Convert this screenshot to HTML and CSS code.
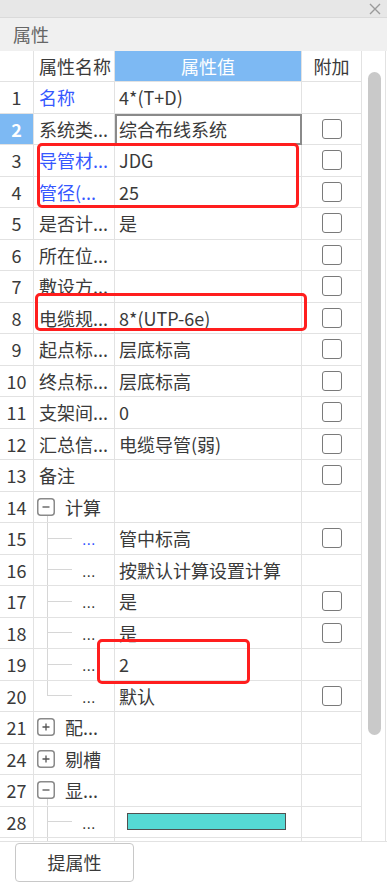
FILE: index.html
```html
<!DOCTYPE html>
<html>

<head>
  <meta charset="UTF-8">
  <title>属性</title>
  <link rel="stylesheet" href="styles.css">
</head>

<body>

  <div id="title-bar">
    <svg class="close-icon" width="12" height="12" viewBox="0 0 12 12">
      <path d="M1 1L11 11M11 1L1 11" stroke="#9a9a9a" stroke-width="1.4" fill="none" />
    </svg>
  </div>

  <div id="panel-title">属性</div>

  <div id="grid-area">
    <div id="grid">
      <div class="row head">
        <div class="cell num"></div>
        <div class="cell name">属性名称</div>
        <div class="cell value">属性值</div>
        <div class="cell extra">附加</div>
      </div>

      <div class="row">
        <div class="cell num">1</div>
        <div class="cell name blue">名称</div>
        <div class="cell value">4*(T+D)</div>
        <div class="cell extra"></div>
      </div>
      <div class="row">
        <div class="cell num selected">2</div>
        <div class="cell name">系统类...</div>
        <div class="cell value editing">综合布线系统</div>
        <div class="cell extra"><span class="check"></span></div>
      </div>
      <div class="row">
        <div class="cell num">3</div>
        <div class="cell name blue">导管材...</div>
        <div class="cell value">JDG</div>
        <div class="cell extra"><span class="check"></span></div>
      </div>
      <div class="row">
        <div class="cell num">4</div>
        <div class="cell name blue">管径(...</div>
        <div class="cell value">25</div>
        <div class="cell extra"><span class="check"></span></div>
      </div>
      <div class="row">
        <div class="cell num">5</div>
        <div class="cell name">是否计...</div>
        <div class="cell value">是</div>
        <div class="cell extra"><span class="check"></span></div>
      </div>
      <div class="row">
        <div class="cell num">6</div>
        <div class="cell name">所在位...</div>
        <div class="cell value"></div>
        <div class="cell extra"><span class="check"></span></div>
      </div>
      <div class="row">
        <div class="cell num">7</div>
        <div class="cell name">敷设方...</div>
        <div class="cell value"></div>
        <div class="cell extra"><span class="check"></span></div>
      </div>
      <div class="row">
        <div class="cell num">8</div>
        <div class="cell name">电缆规...</div>
        <div class="cell value">8*(UTP-6e)</div>
        <div class="cell extra"><span class="check"></span></div>
      </div>
      <div class="row">
        <div class="cell num">9</div>
        <div class="cell name">起点标...</div>
        <div class="cell value">层底标高</div>
        <div class="cell extra"><span class="check"></span></div>
      </div>
      <div class="row">
        <div class="cell num">10</div>
        <div class="cell name">终点标...</div>
        <div class="cell value">层底标高</div>
        <div class="cell extra"><span class="check"></span></div>
      </div>
      <div class="row">
        <div class="cell num">11</div>
        <div class="cell name">支架间...</div>
        <div class="cell value">0</div>
        <div class="cell extra"><span class="check"></span></div>
      </div>
      <div class="row">
        <div class="cell num">12</div>
        <div class="cell name">汇总信...</div>
        <div class="cell value">电缆导管(弱)</div>
        <div class="cell extra"><span class="check"></span></div>
      </div>
      <div class="row">
        <div class="cell num">13</div>
        <div class="cell name">备注</div>
        <div class="cell value"></div>
        <div class="cell extra"><span class="check"></span></div>
      </div>

      <!-- 计算 group -->
      <div class="row">
        <div class="cell num">14</div>
        <div class="cell name group open">
          <svg class="toggle" viewBox="0 0 18 18"><rect x="0.75" y="0.75" width="16.5" height="16.5" rx="3" fill="#fff" stroke="#8a8a8a" stroke-width="1.5" /><path d="M5.5 9H12.5" stroke="#555" stroke-width="1.3" /></svg>
          计算
        </div>
        <div class="cell value"></div>
        <div class="cell extra"></div>
      </div>
      <div class="row">
        <div class="cell num">15</div>
        <div class="cell name branch"><span class="dots blue">...</span></div>
        <div class="cell value">管中标高</div>
        <div class="cell extra"><span class="check"></span></div>
      </div>
      <div class="row">
        <div class="cell num">16</div>
        <div class="cell name branch"><span class="dots">...</span></div>
        <div class="cell value">按默认计算设置计算</div>
        <div class="cell extra"></div>
      </div>
      <div class="row">
        <div class="cell num">17</div>
        <div class="cell name branch"><span class="dots">...</span></div>
        <div class="cell value">是</div>
        <div class="cell extra"><span class="check"></span></div>
      </div>
      <div class="row">
        <div class="cell num">18</div>
        <div class="cell name branch"><span class="dots">...</span></div>
        <div class="cell value">是</div>
        <div class="cell extra"><span class="check"></span></div>
      </div>
      <div class="row">
        <div class="cell num">19</div>
        <div class="cell name branch"><span class="dots">...</span></div>
        <div class="cell value">2</div>
        <div class="cell extra"></div>
      </div>
      <div class="row">
        <div class="cell num">20</div>
        <div class="cell name branch last"><span class="dots">...</span></div>
        <div class="cell value">默认</div>
        <div class="cell extra"><span class="check"></span></div>
      </div>

      <div class="row">
        <div class="cell num">21</div>
        <div class="cell name group">
          <svg class="toggle" viewBox="0 0 18 18"><rect x="0.75" y="0.75" width="16.5" height="16.5" rx="3" fill="#fff" stroke="#8a8a8a" stroke-width="1.5" /><path d="M5.5 9H12.5M9 5.5V12.5" stroke="#555" stroke-width="1.3" /></svg>
          配...
        </div>
        <div class="cell value"></div>
        <div class="cell extra"></div>
      </div>
      <div class="row">
        <div class="cell num">24</div>
        <div class="cell name group">
          <svg class="toggle" viewBox="0 0 18 18"><rect x="0.75" y="0.75" width="16.5" height="16.5" rx="3" fill="#fff" stroke="#8a8a8a" stroke-width="1.5" /><path d="M5.5 9H12.5M9 5.5V12.5" stroke="#555" stroke-width="1.3" /></svg>
          剔槽
        </div>
        <div class="cell value"></div>
        <div class="cell extra"></div>
      </div>
      <div class="row">
        <div class="cell num">27</div>
        <div class="cell name group open">
          <svg class="toggle" viewBox="0 0 18 18"><rect x="0.75" y="0.75" width="16.5" height="16.5" rx="3" fill="#fff" stroke="#8a8a8a" stroke-width="1.5" /><path d="M5.5 9H12.5" stroke="#555" stroke-width="1.3" /></svg>
          显...
        </div>
        <div class="cell value"></div>
        <div class="cell extra"></div>
      </div>
      <div class="row">
        <div class="cell num">28</div>
        <div class="cell name branch"><span class="dots">...</span></div>
        <div class="cell value"><span class="color-bar"></span></div>
        <div class="cell extra"></div>
      </div>
      <!-- next row, only its top edge shows -->
      <div class="row">
        <div class="cell num"></div>
        <div class="cell name branch"></div>
        <div class="cell value"></div>
        <div class="cell extra"></div>
      </div>
    </div>

    <div id="scroll-col">
      <div id="scroll-thumb"></div>
    </div>
  </div>

  <div id="footer">
    <button id="pick-button">提属性</button>
  </div>

  <!-- red annotation boxes -->
  <div class="mark" id="mark-1"></div>
  <div class="mark" id="mark-2"></div>
  <div class="mark" id="mark-3"></div>

</body>

</html>
```

FILE: styles.css
```css
* {
  box-sizing: border-box;
}

body {
  margin: 0;
  padding: 0;
  position: relative;
  height: 882px;
  overflow: hidden;
  font-family: "Noto Sans CJK SC", "Noto Sans", sans-serif;
  font-size: 18px;
  color: #3a3a3a;
  background-color: #fff;
}

#title-bar {
  height: 18px;
  background-color: #e7e7e7;
  border-bottom: 1px solid #dadada;
  display: flex;
  justify-content: flex-end;
  align-items: center;
  padding-right: 6px;
}

#panel-title {
  height: 33px;
  line-height: 33px;
  padding-left: 13px;
  background-color: #f0f0f0;
  color: #666;
}

#grid-area {
  display: flex;
  height: 791px;
  overflow: hidden;
  border-bottom: 1px solid #e2e2e2;
}

#grid {
  width: 362px;
  flex: none;
}

.row {
  display: grid;
  grid-template-columns: 34px 81px 187px 60px;
  height: 31.5px;
}

.row.head {
  height: 31px;
}

.cell {
  display: flex;
  align-items: center;
  overflow: hidden;
  white-space: nowrap;
  border-right: 1px solid #e2e2e2;
  border-bottom: 1px solid #e2e2e2;
}

.num {
  justify-content: center;
}

.num.selected {
  background-color: #7db9f3;
  color: #fff;
  font-weight: bold;
}

.name {
  padding-left: 5px;
}

.value {
  padding-left: 4px;
}

.head .value {
  justify-content: center;
  padding-left: 0;
  background-color: #7db9f3;
  color: #fff;
}

.value.editing {
  outline: 2px solid #8a8a8a;
  outline-offset: -2px;
}

.extra {
  justify-content: center;
}

.blue {
  color: #3658ff;
}

.check {
  width: 20px;
  height: 20px;
  border: 1.5px solid #7a7a7a;
  border-radius: 3px;
  background-color: #fff;
}

/* tree column */
.group {
  padding-left: 3px;
}

.group.open {
  background: linear-gradient(#d6d6d6, #d6d6d6) 13px 100% / 1px 50% no-repeat;
}

.toggle {
  width: 18px;
  height: 18px;
  margin-right: 10px;
  flex: none;
}

.branch {
  padding-left: 48px;
  background:
    linear-gradient(#d6d6d6, #d6d6d6) 13px 0 / 1px 100% no-repeat,
    linear-gradient(#d6d6d6, #d6d6d6) 13px 50% / 25px 1px no-repeat;
}

.branch.last {
  background-size: 1px 50%, 25px 1px;
}

.dots {
  font-family: "Liberation Sans", sans-serif;
  font-size: 16px;
  padding-top: 4px;
}

.color-bar {
  margin-left: 8px;
  width: 159px;
  height: 17px;
  background-color: #55d9d4;
  border: 1.5px solid #505050;
}

#scroll-col {
  width: 24px;
  border-right: 1px solid #e2e2e2;
  padding-top: 21px;
  padding-left: 6px;
}

#scroll-thumb {
  width: 13px;
  height: 663px;
  border-radius: 7px;
  background-color: #c9c9c9;
}

#footer {
  padding: 1px 0 0 15px;
}

#pick-button {
  width: 119px;
  height: 39px;
  padding: 0;
  border: 1px solid #c8c8c8;
  border-radius: 4px;
  background-color: #fff;
  font-family: inherit;
  font-size: 18px;
  line-height: 37px;
  color: #3a3a3a;
}

.mark {
  position: absolute;
  border: 3px solid #ff1e1e;
  border-radius: 5px;
}

#mark-1 {
  left: 37px;
  top: 143px;
  width: 262px;
  height: 65px;
}

#mark-2 {
  left: 35px;
  top: 293px;
  width: 272px;
  height: 38px;
}

#mark-3 {
  left: 97px;
  top: 639px;
  width: 153px;
  height: 45px;
}
```
